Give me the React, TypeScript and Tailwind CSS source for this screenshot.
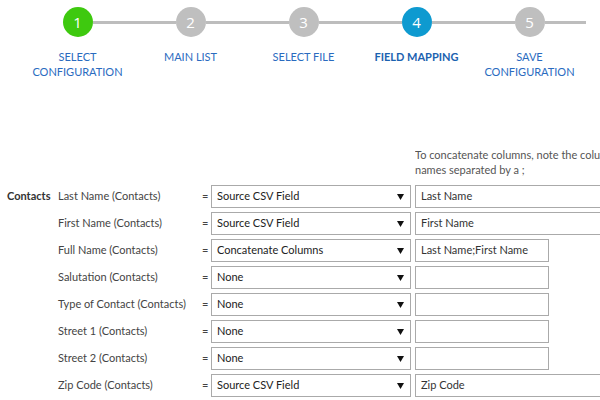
const steps = [
  { n: "1", label: ["SELECT", "CONFIGURATION"], state: "done" },
  { n: "2", label: ["MAIN LIST"], state: "todo" },
  { n: "3", label: ["SELECT FILE"], state: "todo" },
  { n: "4", label: ["FIELD MAPPING"], state: "active" },
  { n: "5", label: ["SAVE", "CONFIGURATION"], state: "todo" },
];

const rows = [
  { label: "Last Name (Contacts)", mode: "Source CSV Field", value: "Last Name", wide: true },
  { label: "First Name (Contacts)", mode: "Source CSV Field", value: "First Name", wide: true },
  { label: "Full Name (Contacts)", mode: "Concatenate Columns", value: "Last Name;First Name", wide: false },
  { label: "Salutation (Contacts)", mode: "None", value: "", wide: false },
  { label: "Type of Contact (Contacts)", mode: "None", value: "", wide: false },
  { label: "Street 1 (Contacts)", mode: "None", value: "", wide: false },
  { label: "Street 2 (Contacts)", mode: "None", value: "", wide: false },
  { label: "Zip Code (Contacts)", mode: "Source CSV Field", value: "Zip Code", wide: true },
];

const Step = ({ n, label, state, first }: { n: string; label: string[]; state: string; first: boolean }) => {
  const circle =
    state === "done" ? "bg-[#3ec90f]" : state === "active" ? "bg-[#0e9ad0]" : "bg-[#bfbfbf]";
  return (
    <div className="w-[113px] shrink-0 flex flex-col items-center">
      <div className="flex items-center w-full h-[30px]">
        <div className={`h-[3px] flex-1 ${first ? "bg-transparent" : "bg-[#bdbdbd]"}`} />
        <div
          className={`w-[30px] h-[30px] shrink-0 rounded-full flex items-center justify-center text-white text-[15px] font-['Open_Sans',sans-serif] ${circle}`}
        >
          {n}
        </div>
        <div className="h-[3px] flex-1 bg-[#bdbdbd]" />
      </div>
      <div
        className={`mt-[12px] text-center leading-[15px] text-[11px] ${
          state === "active" ? "font-bold text-[#1b62b0]" : "text-[#2a6bbf]"
        }`}
      >
        {label.map((l) => (
          <div key={l}>{l}</div>
        ))}
      </div>
    </div>
  );
};

const App = () => {
  return (
    <div className="w-[600px] h-[400px] overflow-hidden bg-white font-['Lato',sans-serif] text-[11px] text-[#444]">
      {/* stepper */}
      <div className="flex pl-[21px] pt-[7px]">
        {steps.map((s, i) => (
          <Step key={s.n} {...s} first={i === 0} />
        ))}
      </div>

      {/* help text */}
      <div className="mt-[68px] ml-[415px] w-[185px] overflow-hidden leading-[15px] text-[#555] whitespace-nowrap">
        <div>To concatenate columns, note the colu</div>
        <div>names separated by a ;</div>
      </div>

      {/* mapping rows */}
      <div className="mt-[8px] flex flex-col gap-[4px]">
        {rows.map((r, i) => (
          <div key={r.label} className="flex items-center h-[23px] whitespace-nowrap">
            <div className="w-[58px] shrink-0 pl-[7px] font-bold text-[#333]">{i === 0 ? "Contacts" : ""}</div>
            <div className="w-[141px] shrink-0">{r.label}</div>
            <div className="w-[12px] shrink-0 pl-[3px]">=</div>
            <div className="w-[200px] shrink-0 h-[23px] border border-[#aaa] flex items-center justify-between pl-[5px] pr-[6px] text-[#222]">
              <span>{r.mode}</span>
              <svg width="7" height="8" viewBox="0 0 7 8">
                <polygon points="0,1 7,1 3.5,7" fill="#111" />
              </svg>
            </div>
            <div
              className={`ml-[4px] h-[23px] border border-[#aaa] flex items-center pl-[5px] shrink-0 text-[#333] ${
                r.wide ? "w-[220px]" : "w-[134px]"
              }`}
            >
              {r.value}
            </div>
          </div>
        ))}
      </div>
    </div>
  );
};

export default App;
